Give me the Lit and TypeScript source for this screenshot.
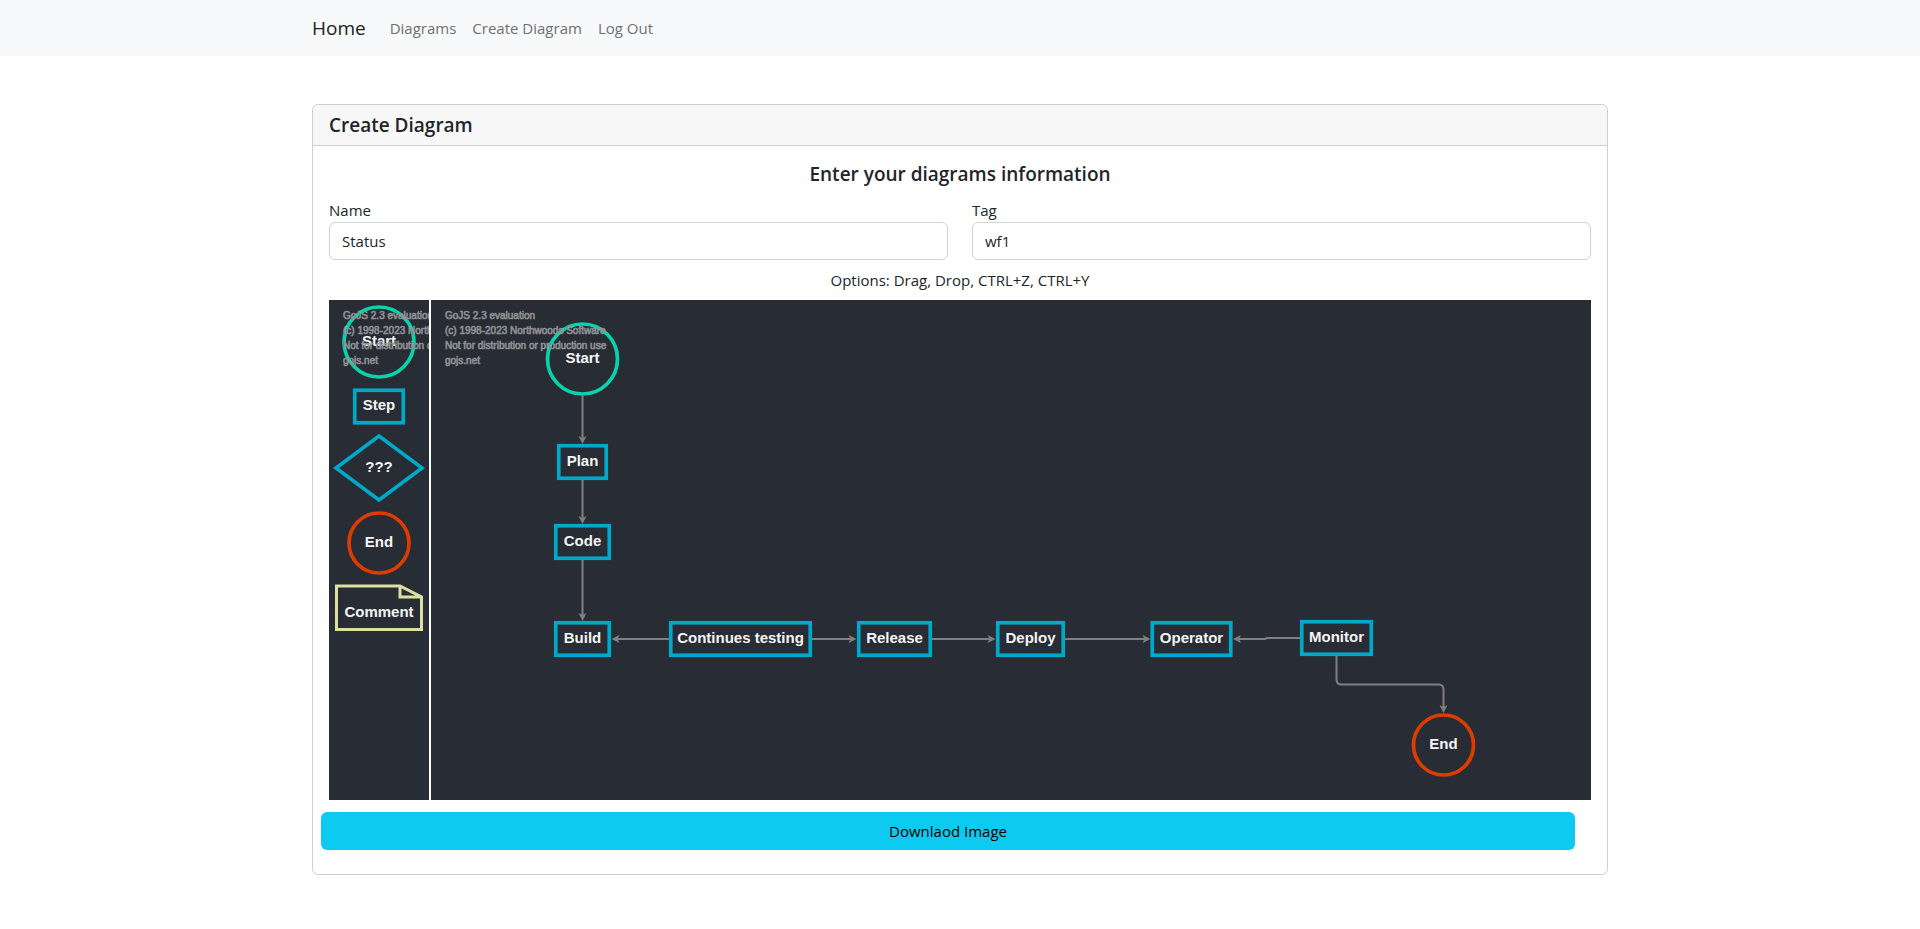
import { LitElement, html, svg, css } from "lit";
import { customElement, property } from "lit/decorators.js";

type Shape = "start" | "end" | "step" | "decision" | "comment";

interface DiagramNode {
  shape: Shape;
  text: string;
  // Centre of the node and the baseline of its label.
  x: number;
  y: number;
  baseline: number;
  width?: number;
}

interface DiagramLink {
  path: string;
  tip: [number, number];
  angle: number;
}

const NOTICE = [
  "GoJS 2.3 evaluation",
  "(c) 1998-2023 Northwoods Software",
  "Not for distribution or production use",
  "gojs.net",
];

const PALETTE: DiagramNode[] = [
  { shape: "start", text: "Start", x: 50, y: 42, baseline: 46 },
  { shape: "step", text: "Step", x: 50, y: 106.5, baseline: 110, width: 52 },
  { shape: "decision", text: "???", x: 50, y: 168, baseline: 172 },
  { shape: "end", text: "End", x: 50, y: 243, baseline: 247 },
  { shape: "comment", text: "Comment", x: 50, y: 307.5, baseline: 317 },
];

const NODES: DiagramNode[] = [
  { shape: "start", text: "Start", x: 151.5, y: 59, baseline: 63 },
  { shape: "step", text: "Plan", x: 151.5, y: 162, baseline: 166, width: 51 },
  { shape: "step", text: "Code", x: 151.5, y: 242, baseline: 246, width: 57 },
  { shape: "step", text: "Build", x: 151.5, y: 339, baseline: 343, width: 57 },
  { shape: "step", text: "Continues testing", x: 309.5, y: 339, baseline: 343, width: 143 },
  { shape: "step", text: "Release", x: 463.5, y: 339, baseline: 343, width: 75 },
  { shape: "step", text: "Deploy", x: 599.5, y: 339, baseline: 343, width: 69 },
  { shape: "step", text: "Operator", x: 760.5, y: 339, baseline: 343, width: 82 },
  { shape: "step", text: "Monitor", x: 905.5, y: 338, baseline: 342, width: 73 },
  { shape: "end", text: "End", x: 1012.5, y: 445, baseline: 449 },
];

const LINKS: DiagramLink[] = [
  { path: "M151.5 96V138", tip: [151.5, 144], angle: 90 },
  { path: "M151.5 180V218", tip: [151.5, 224], angle: 90 },
  { path: "M151.5 260V315", tip: [151.5, 321], angle: 90 },
  { path: "M238 339H186", tip: [180.5, 339], angle: 180 },
  { path: "M381 339H420", tip: [425.5, 339], angle: 0 },
  { path: "M501 339H559", tip: [564.5, 339], angle: 0 },
  { path: "M634 339H714", tip: [719.5, 339], angle: 0 },
  { path: "M869 338H836L834 339H808", tip: [802, 339], angle: 180 },
  { path: "M905.5 356V379.5Q905.5 384.5 910.5 384.5H1007.5Q1012.5 384.5 1012.5 389.5V407", tip: [1012.5, 413], angle: 90 },
];

@customElement("flow-canvas")
export class FlowCanvas extends LitElement {
  @property({ attribute: false }) nodes: DiagramNode[] = [];
  @property({ attribute: false }) links: DiagramLink[] = [];
  @property() label = "";

  static styles = css`
    :host {
      display: block;
      height: 500px;
      background: #282c34;
      overflow: hidden;
    }
    .surface {
      display: block;
      width: 100%;
      height: 100%;
      font-family: "Liberation Sans", Arial, sans-serif;
    }
    .shape {
      fill: #282c34;
      stroke-width: 3.7px;
    }
    .start { stroke: #09d3ac; }
    .end { stroke: #dc3c00; }
    .step, .decision { stroke: #00a9c9; }
    .comment { stroke: #dee0a3; stroke-width: 3px; }
    .caption {
      fill: #f5f5f5;
      font-size: 15px;
      font-weight: 700;
      text-anchor: middle;
    }
    .link {
      fill: none;
      stroke: #808080;
      stroke-width: 2px;
    }
    .arrow { fill: #808080; }
    .notice {
      fill: #919295;
      stroke: #919295;
      stroke-width: 0.6px;
      font-size: 10px;
    }
  `;

  private outline(n: DiagramNode) {
    switch (n.shape) {
      case "start":
        return svg`<circle class="shape start" cx=${n.x} cy=${n.y} r="35"></circle>`;
      case "end":
        return svg`<circle class="shape end" cx=${n.x} cy=${n.y} r="30"></circle>`;
      case "decision":
        return svg`<path class="shape decision" d="M${n.x - 43} ${n.y}L${n.x} ${n.y - 32}L${n.x + 43} ${n.y}L${n.x} ${n.y + 32}Z"></path>`;
      case "comment":
        return svg`<path class="shape comment" transform="translate(${n.x} ${n.y})"
          d="M-42.5 -21.5H21L42.5 -10.5V22H-42.5ZM21 -21.5V-10.5H42.5"></path>`;
      default: {
        const w = (n.width ?? 60) - 3.5;
        return svg`<rect class="shape step" x=${n.x - w / 2} y=${n.y - 16.25} width=${w} height="32.5"></rect>`;
      }
    }
  }

  render() {
    return html`
      <svg class="surface" role="img" aria-label=${this.label}>
        ${this.links.map((l) => svg`
          <path class="link" d=${l.path}></path>
          <path class="arrow" d="M0 0L-8 4L-6 0L-8 -4Z"
            transform="translate(${l.tip[0]} ${l.tip[1]}) rotate(${l.angle})"></path>`)}
        ${this.nodes.map((n) => svg`
          ${this.outline(n)}
          <text class="caption" x=${n.x} y=${n.baseline}>${n.text}</text>`)}
        ${NOTICE.map((line, i) => svg`<text class="notice" x="14" y=${19 + i * 15}>${line}</text>`)}
      </svg>
    `;
  }
}

@customElement("app-root")
export class AppRoot extends LitElement {
  static styles = css`
    :host {
      display: block;
      color: #212529;
      font-family: "Segoe UI", "Open Sans", "Noto Sans", sans-serif;
      font-size: 15px;
      line-height: 24px;
    }
    * { box-sizing: border-box; }
    .navbar { background: #f8f9fa; }
    .container {
      max-width: 1320px;
      margin: 0 auto;
      padding: 0 12px;
    }
    .bar {
      display: flex;
      align-items: center;
      min-height: 56px;
    }
    .brand {
      margin-right: 16px;
      color: #202122;
      font-size: 19px;
      text-decoration: none;
    }
    .links {
      display: flex;
      margin: 0;
      padding: 0;
      list-style: none;
    }
    .link {
      display: block;
      padding: 8px;
      color: #6f7071;
      text-decoration: none;
    }
    .card {
      margin: 48px 0;
      border: 1px solid #d0d0d0;
      border-radius: 6px;
      background: #fff;
    }
    .header {
      padding: 8px 16px;
      border-bottom: 1px solid #d0d0d0;
      border-radius: 5px 5px 0 0;
      background: #f7f7f7;
    }
    .title {
      margin: 0;
      font-size: 19px;
      font-weight: 600;
      line-height: 24px;
    }
    .body { padding: 16px 16px 24px; }
    .center { text-align: center; }
    .fields {
      display: grid;
      grid-template-columns: 1fr 1fr;
      gap: 24px;
      margin-top: 12px;
    }
    .label { display: block; }
    .input {
      display: block;
      width: 100%;
      height: 38px;
      padding: 6px 12px;
      border: 1px solid #ced4da;
      border-radius: 6px;
      background: #fff;
      color: inherit;
      font: inherit;
    }
    .hint { margin: 8px 0; text-align: center; }
    .editor {
      display: grid;
      grid-template-columns: 100px 1fr;
      gap: 2px;
    }
    .actions {
      display: flex;
      margin: 12px 16px 0 -8px;
    }
    .download {
      flex: 1;
      height: 38px;
      padding: 6px 12px;
      border: 0;
      border-radius: 6px;
      background: #0dcaf0;
      color: #000;
      font: inherit;
      cursor: pointer;
    }
  `;

  render() {
    return html`
      <nav class="navbar">
        <div class="container bar">
          <a class="brand" href="#">Home</a>
          <ul class="links">
            <li><a class="link" href="#">Diagrams</a></li>
            <li><a class="link" href="#">Create Diagram</a></li>
            <li><a class="link" href="#">Log Out</a></li>
          </ul>
        </div>
      </nav>
      <main class="container">
        <section class="card">
          <header class="header"><h1 class="title">Create Diagram</h1></header>
          <div class="body">
            <h2 class="title center">Enter your diagrams information</h2>
            <div class="fields">
              <div>
                <label class="label" for="name">Name</label>
                <input class="input" id="name" type="text" .value=${"Status"} />
              </div>
              <div>
                <label class="label" for="tag">Tag</label>
                <input class="input" id="tag" type="text" .value=${"wf1"} />
              </div>
            </div>
            <p class="hint">Options: Drag, Drop, CTRL+Z, CTRL+Y</p>
            <div class="editor">
              <flow-canvas label="Palette" .nodes=${PALETTE}></flow-canvas>
              <flow-canvas label="Diagram" .nodes=${NODES} .links=${LINKS}></flow-canvas>
            </div>
            <div class="actions">
              <button class="download" type="button">Downlaod Image</button>
            </div>
          </div>
        </section>
      </main>
    `;
  }
}
